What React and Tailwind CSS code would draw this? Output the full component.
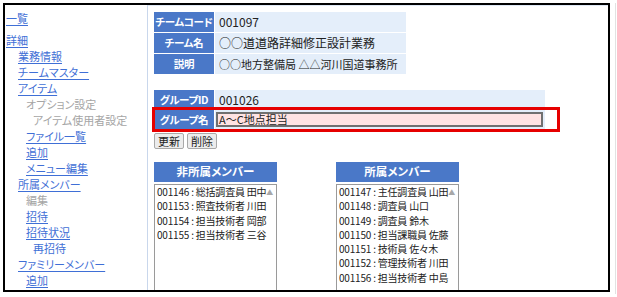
import React from "react";

const nav = [
  { t: "一覧", lv: 0, k: "link" },
  { t: "詳細", lv: 0, k: "link", gap: true },
  { t: "業務情報", lv: 1, k: "link" },
  { t: "チームマスター", lv: 1, k: "link" },
  { t: "アイテム", lv: 1, k: "link" },
  { t: "オプション設定", lv: 2, k: "gray" },
  { t: "アイテム使用者設定", lv: 3, k: "gray" },
  { t: "ファイル一覧", lv: 2, k: "link" },
  { t: "追加", lv: 2, k: "link" },
  { t: "メニュー編集", lv: 2, k: "link" },
  { t: "所属メンバー", lv: 1, k: "link" },
  { t: "編集", lv: 2, k: "gray" },
  { t: "招待", lv: 2, k: "link" },
  { t: "招待状況", lv: 2, k: "link" },
  { t: "再招待", lv: 3, k: "plain" },
  { t: "ファミリーメンバー", lv: 1, k: "link" },
  { t: "追加", lv: 2, k: "link" },
];

const indent = ["pl-[1px]", "pl-[13px]", "pl-[21px]", "pl-[28px]"];

const nonMembers = [
  "001146 : 総括調査員 田中",
  "001153 : 照査技術者 川田",
  "001154 : 担当技術者 岡部",
  "001155 : 担当技術者 三谷",
];
const members = [
  "001147 : 主任調査員 山田",
  "001148 : 調査員 山口",
  "001149 : 調査員 鈴木",
  "001150 : 担当課職員 佐藤",
  "001151 : 技術員 佐々木",
  "001152 : 管理技術者 川田",
  "001156 : 担当技術者 中島",
];

function Label({ children }) {
  return (
    <div className="w-[60px] shrink-0 bg-[#4a78c8] text-white font-bold text-[10.5px] tracking-[-0.3px] flex items-center justify-center whitespace-nowrap overflow-hidden">
      {children}
    </div>
  );
}

function Row({ label, children, h = "h-[20px]", vw = "w-[191px]", ts = "text-[12px]" }) {
  return (
    <div className={`flex gap-px ${h}`}>
      <Label>{label}</Label>
      <div className={`${vw} shrink-0 bg-[#e4eefa] ${ts} text-[#222] flex items-center pl-[4px] whitespace-nowrap overflow-hidden`}>
        {children}
      </div>
    </div>
  );
}

function MemberBox({ title, items }) {
  return (
    <div className="w-[123px] shrink-0 flex flex-col">
      <div className="h-[20px] bg-[#4a78c8] text-white font-bold text-[11.5px] flex items-center justify-center">
        {title}
      </div>
      <div className="mt-[2px] h-[130px] border border-[#9a9a9a] relative text-[10px] tracking-[-0.2px] leading-[14.3px] text-[#222] pl-[2px]">
        {items.map((s) => (
          <div key={s} className="whitespace-nowrap">{s}</div>
        ))}
        <span className="absolute right-[3px] top-[1px] text-[7px] text-[#a8a8a8] leading-[12px]">▲</span>
      </div>
    </div>
  );
}

export default function App() {
  return (
    <div className="w-[617px] h-[297px] bg-white relative overflow-hidden font-['Noto_Sans_CJK_JP','Noto_Sans',sans-serif] [font-feature-settings:'palt']">
      <div className="absolute right-[1px] top-[3px] bottom-[3px] w-px bg-[#e2e2e2]" />
      <div className="ml-[3px] mt-[3px] w-[607px] h-[289px] border-2 border-black flex overflow-hidden">
        <nav className="w-[142px] shrink-0 pt-[5px] text-[11px] leading-[16px]">
          {nav.map((n, i) => (
            <div key={i} className={`${indent[n.lv]} ${n.gap ? "mt-[6px]" : ""} whitespace-nowrap`}>
              {n.k === "link" && <span className="text-[#3f6fd6] underline underline-offset-[2px]">{n.t}</span>}
              {n.k === "gray" && <span className="text-[#a5a5a5]">{n.t}</span>}
              {n.k === "plain" && <span className="text-[#3f6fd6]">{n.t}</span>}
            </div>
          ))}
        </nav>
        <div className="w-px shrink-0 bg-[#c9d7ec]" />
        <main className="flex-1 relative border-t border-[#dfe9f6] pl-[6px] pt-[6px] overflow-hidden">
          <div className="flex flex-col gap-px">
            <Row label="チームコード">001097</Row>
            <Row label="チーム名">○○道道路詳細修正設計業務</Row>
            <Row label="説明" ts="text-[11px]">○○地方整備局 △△河川国道事務所</Row>
          </div>

          <div className="mt-[16px] flex flex-col gap-px">
            <Row label="グループID" h="h-[19px]" vw="w-[330px]">001026</Row>
            <div className="flex gap-px h-[19px]">
              <Label>グループ名</Label>
              <div className="w-[330px] shrink-0 bg-[#e4eefa] flex items-center pl-[1px]">
                <div className="w-[327px] h-[15px] bg-[#ffe3e3] border-2 border-[#707070] text-[11px] leading-[11px] text-[#222] pl-[1px] flex items-center whitespace-nowrap">
                  A～C地点担当
                </div>
              </div>
            </div>
          </div>

          <div className="mt-[4px] flex gap-[3px]">
            <button className="w-[30px] h-[16px] bg-[#ececec] border border-[#a9a9a9] rounded-[2px] text-[11px] leading-[14px] text-[#222] flex items-center justify-center">
              更新
            </button>
            <button className="w-[30px] h-[16px] bg-[#ececec] border border-[#a9a9a9] rounded-[2px] text-[11px] leading-[14px] text-[#222] flex items-center justify-center">
              削除
            </button>
          </div>

          <div className="mt-[13px] flex gap-[59px]">
            <MemberBox title="非所属メンバー" items={nonMembers} />
            <MemberBox title="所属メンバー" items={members} />
          </div>

          <div className="absolute left-[4px] top-[101px] w-[408px] h-[25px] border-[3px] border-[#e60000] pointer-events-none" />
        </main>
      </div>
    </div>
  );
}
